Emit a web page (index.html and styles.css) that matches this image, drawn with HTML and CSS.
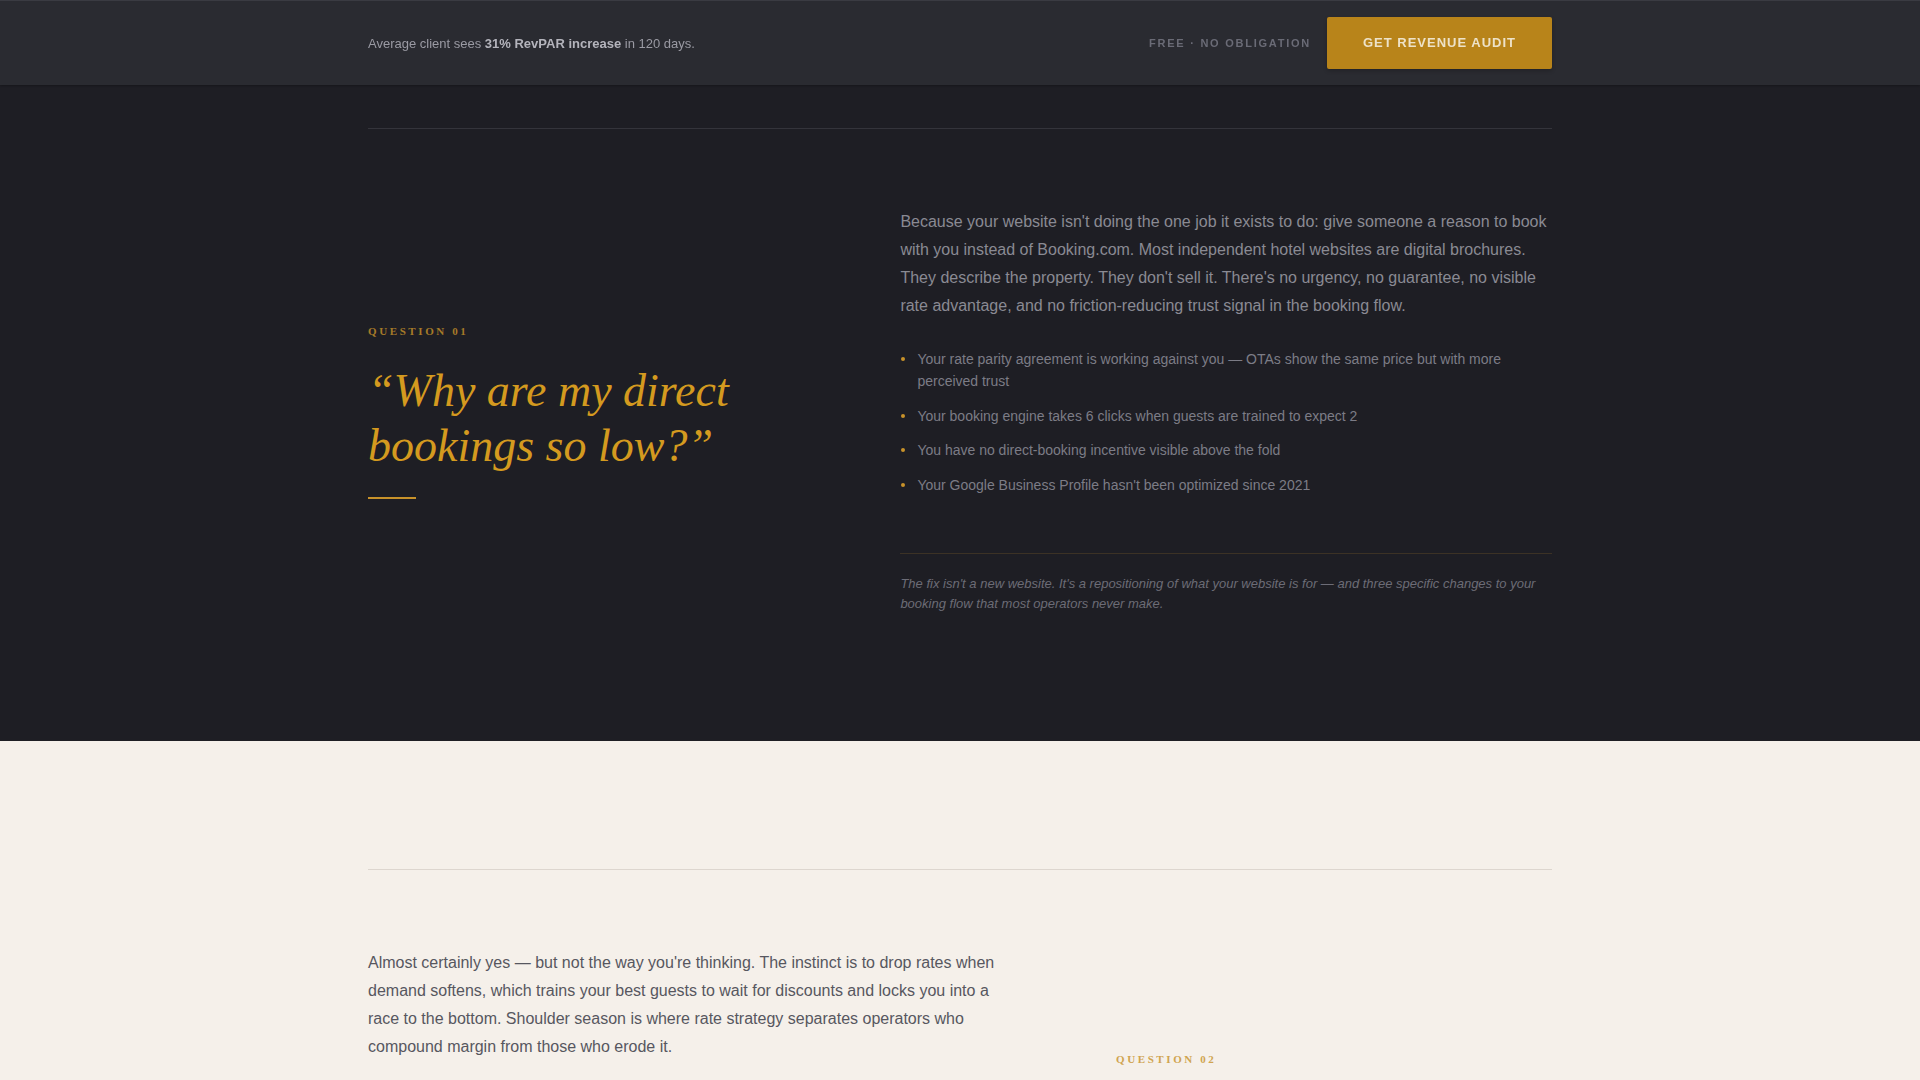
FILE: index.html
```html
<!DOCTYPE html>
<html lang="en">
<head>
    <meta charset="UTF-8">
    <meta name="viewport" content="width=device-width, initial-scale=1.0">
    <title>Revenue Audit — Questions</title>
    <link rel="stylesheet" href="styles.css">
</head>
<body>
    <header class="top-bar">
        <div class="wrap top-bar-inner">
            <p class="proof">Average client sees <strong>31% RevPAR increase</strong> in 120 days.</p>
            <div class="top-cta">
                <span class="cta-note">FREE · NO OBLIGATION</span>
                <a class="cta-btn" href="#audit">GET REVENUE AUDIT</a>
            </div>
        </div>
    </header>

    <section class="qa qa-dark">
        <div class="wrap qa-grid">
            <div class="qa-head">
                <div class="qa-label">QUESTION 01</div>
                <h2 class="qa-title">“Why are my direct bookings so low?”</h2>
                <div class="qa-rule"></div>
            </div>
            <div class="qa-body">
                <p class="qa-lead">Because your website isn't doing the one job it exists to do: give someone a reason to book with you instead of Booking.com. Most independent hotel websites are digital brochures. They describe the property. They don't sell it. There's no urgency, no guarantee, no visible rate advantage, and no friction-reducing trust signal in the booking flow.</p>
                <ul class="qa-list">
                    <li>Your rate parity agreement is working against you — OTAs show the same price but with more perceived trust</li>
                    <li>Your booking engine takes 6 clicks when guests are trained to expect 2</li>
                    <li>You have no direct-booking incentive visible above the fold</li>
                    <li>Your Google Business Profile hasn't been optimized since 2021</li>
                </ul>
                <p class="qa-note">The fix isn't a new website. It's a repositioning of what your website is for — and three specific changes to your booking flow that most operators never make.</p>
            </div>
        </div>
    </section>

    <section class="qa qa-light">
        <div class="wrap qa-grid qa-grid-flip">
            <div class="qa-body">
                <p class="qa-lead">Almost certainly yes — but not the way you're thinking. The instinct is to drop rates when demand softens, which trains your best guests to wait for discounts and locks you into a race to the bottom. Shoulder season is where rate strategy separates operators who compound margin from those who erode it.</p>
                <ul class="qa-list">
                    <li>Packages protect your rate integrity while still creating a reason to book now, especially for weekday stays that would otherwise sit empty</li>
                    <li>Length-of-stay pricing fills gaps without touching your public rate</li>
                    <li>Local and drive-in markets respond to experiences and offers, not to discounts — and they book closer to arrival than most operators plan for</li>
                    <li>Your past guests are the cheapest shoulder-season demand you have</li>
                    <li>Midweek corporate and group business is rarely marketed directly</li>
                    <li>Your OTA visibility settings should change with the season, not stay fixed</li>
                </ul>
                <p class="qa-note">The goal isn't to be cheaper in the slow months. It's to be the obvious choice for the guests who were already looking.</p>
            </div>
            <div class="qa-head">
                <div class="qa-label">QUESTION 02</div>
                <h2 class="qa-title">“Should I be running promotions in shoulder season?”</h2>
                <div class="qa-rule"></div>
            </div>
        </div>
    </section>
</body>
</html>
```

FILE: styles.css
```css
* {
    margin: 0;
    padding: 0;
    box-sizing: border-box;
}

body {
    font-family: 'Liberation Sans', Arial, sans-serif;
    background: #1e1e24;
    color: #8a8a93;
}

.wrap {
    width: 1184px;
    margin: 0 auto;
}

/* barra superior fija */
.top-bar {
    position: fixed;
    top: 0;
    left: 0;
    right: 0;
    height: 85px;
    background: #2a2b31;
    border-top: 1px solid #3a3b42;
    box-shadow: 0 1px 2px rgba(0, 0, 0, 0.25);
    z-index: 10;
}

.top-bar-inner {
    height: 100%;
    display: flex;
    justify-content: space-between;
    align-items: center;
}

.proof {
    font-size: 13px;
    color: #9a9aa3;
}

.proof strong {
    color: #b4b4bc;
    font-weight: bold;
}

.top-cta {
    display: flex;
    align-items: center;
    gap: 16px;
}

.cta-note {
    font-size: 11px;
    font-weight: bold;
    letter-spacing: 1.75px;
    color: #6a6b76;
}

.cta-btn {
    display: block;
    height: 52px;
    line-height: 52px;
    padding: 0 36px;
    background: #b8841a;
    color: #ede2c8;
    font-size: 13px;
    font-weight: bold;
    letter-spacing: 1px;
    text-decoration: none;
    border-radius: 2px;
    box-shadow: 0 2px 4px rgba(0, 0, 0, 0.2);
}

/* secciones de preguntas */
.qa {
    padding: 128px 0;
}

.qa-dark {
    background: #1e1e24;
}

.qa-light {
    background: #f5f0ea;
}

.qa-grid {
    display: grid;
    grid-template-columns: 2fr 3fr;
    column-gap: 98px;
    align-items: center;
    border-top: 1px solid #34343b;
    padding-top: 79px;
}

.qa-grid-flip {
    grid-template-columns: 3fr 2fr;
    column-gap: 94px;
}

.qa-light .qa-grid {
    border-top-color: #ddd6cf;
}

.qa-label {
    font-family: 'Liberation Serif', 'Times New Roman', serif;
    font-size: 11px;
    font-weight: bold;
    letter-spacing: 2.6px;
    line-height: 16px;
    color: #c8922a;
    opacity: 0.8;
}

.qa-title {
    margin-top: 24px;
    font-family: 'Liberation Serif', 'Times New Roman', serif;
    font-style: italic;
    font-weight: normal;
    font-size: 46px;
    line-height: 55px;
    color: #d49a1f;
    max-width: 380px;
}

.qa-rule {
    width: 48px;
    height: 2px;
    margin-top: 24px;
    background: #c8922a;
}

.qa-lead {
    font-size: 16px;
    line-height: 1.75;
    color: #8a8a93;
}

.qa-list {
    list-style: none;
    margin-top: 28px;
}

.qa-list li {
    position: relative;
    padding-left: 17px;
    font-size: 14px;
    line-height: 22.4px;
    color: #7c7c86;
}

.qa-list li + li {
    margin-top: 12px;
}

.qa-list li:before {
    content: '';
    position: absolute;
    left: 1px;
    top: 9px;
    width: 4px;
    height: 4px;
    border-radius: 50%;
    background: #c8922a;
}

.qa-note {
    margin-top: 57px;
    padding-top: 20px;
    border-top: 1px solid rgba(200, 146, 42, 0.18);
    font-size: 13px;
    font-style: italic;
    line-height: 19.5px;
    color: #6c6c76;
}

.qa-light .qa-lead {
    color: #57575f;
}

.qa-light .qa-list li {
    color: #66666e;
}

.qa-light .qa-note {
    margin-top: 51px;
    color: #7a7a82;
}
```
